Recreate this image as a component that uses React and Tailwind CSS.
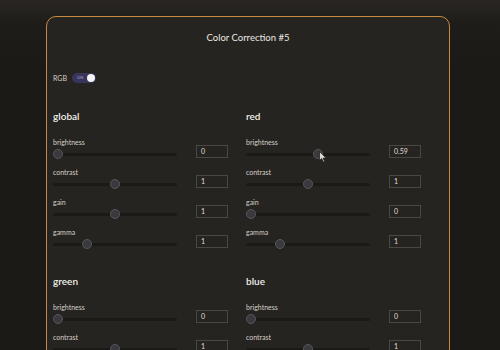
const sections = [
  {
    name: 'global',
    params: [
      { label: 'brightness', value: '0', pct: 0 },
      { label: 'contrast', value: '1', pct: 0.5 },
      { label: 'gain', value: '1', pct: 0.5 },
      { label: 'gamma', value: '1', pct: 0.25 },
    ],
  },
  {
    name: 'red',
    params: [
      { label: 'brightness', value: '0.59', pct: 0.59, cursor: true },
      { label: 'contrast', value: '1', pct: 0.5 },
      { label: 'gain', value: '0', pct: 0 },
      { label: 'gamma', value: '1', pct: 0.25 },
    ],
  },
  {
    name: 'green',
    params: [
      { label: 'brightness', value: '0', pct: 0 },
      { label: 'contrast', value: '1', pct: 0.5 },
      { label: 'gain', value: '1', pct: 0.5 },
      { label: 'gamma', value: '1', pct: 0.25 },
    ],
  },
  {
    name: 'blue',
    params: [
      { label: 'brightness', value: '0', pct: 0 },
      { label: 'contrast', value: '1', pct: 0.5 },
      { label: 'gain', value: '1', pct: 0.5 },
      { label: 'gamma', value: '1', pct: 0.25 },
    ],
  },
];

const Slider = ({ pct, cursor }) => (
  <div className="relative h-[14px] w-[124px] flex items-center">
    <div className="h-[3px] w-full rounded-full bg-[#1c1a17]" />
    <div
      className="absolute top-1/2 h-[10px] w-[10px] -translate-y-1/2 rounded-full border border-[#57565c] bg-[#3a393d]"
      style={{ left: `${pct * 114}px` }}
    />
    {cursor && (
      <svg
        className="absolute"
        style={{ left: `${pct * 114 + 6}px`, top: '4px' }}
        width="8"
        height="12"
        viewBox="0 0 8 12"
      >
        <path d="M0.5 0.5 L0.5 9.5 L2.7 7.6 L4.2 11 L5.6 10.4 L4.1 7.1 L7.2 7.1 Z" fill="#d8d6d2" stroke="#222" strokeWidth="0.8" />
      </svg>
    )}
  </div>
);

const ParamRow = ({ label, value, pct, cursor }) => (
  <div className="flex h-[30px]">
    <div className="flex flex-col w-[124px]">
      <div className="h-[10px] text-[7px] leading-[10px] text-[#d4cfc8]">{label}</div>
      <Slider pct={pct} cursor={cursor} />
    </div>
    <div className="ml-[19px] mt-[8px] flex h-[13px] w-[32px] items-center border border-[#4a4845] pl-[4px] text-[7px] text-[#e2ded8]">
      {value}
    </div>
  </div>
);

const Section = ({ name, params }) => (
  <div className="flex flex-col h-[165px]">
    <div className="h-[14px] text-[10px] leading-[14px] font-semibold text-[#f1eee9]">{name}</div>
    <div className="mt-[14px] flex flex-col">
      {params.map((p) => (
        <ParamRow key={p.label} {...p} />
      ))}
    </div>
  </div>
);

export default function App() {
  return (
    <div
      className="h-[350px] w-[500px] overflow-hidden bg-[linear-gradient(to_bottom,#2a2723_0px,#1f1d1a_22px,#1c1a17_60px)] pt-[16px] pl-[46px]"
      style={{ fontFamily: 'Lato, "Open Sans", sans-serif' }}
    >
      <div className="h-[400px] w-[404px] rounded-[10px] border-[1.5px] border-[#c68b40] bg-[#262420] pl-[6px]">
        <div className="pt-[14px] h-[14px] box-content text-center text-[9.5px] leading-[14px] text-[#ebe7e2] pr-[6px]">
          Color Correction #5
        </div>
        <div className="mt-[27px] flex h-[12px] items-center gap-[5px]">
          <span className="text-[7px] text-[#d4cfc8]">RGB</span>
          <div className="relative flex h-[10px] w-[24px] items-center rounded-full bg-[#39345a]">
            <span className="ml-[5px] text-[4px] leading-none text-[#a9a3c8]">ON</span>
            <div className="absolute right-[1px] h-[8px] w-[8px] rounded-full bg-[#f4f3f7]" />
          </div>
        </div>
        <div className="mt-[25px] grid grid-cols-[193px_193px]">
          {sections.map((s) => (
            <Section key={s.name} {...s} />
          ))}
        </div>
      </div>
    </div>
  );
}
